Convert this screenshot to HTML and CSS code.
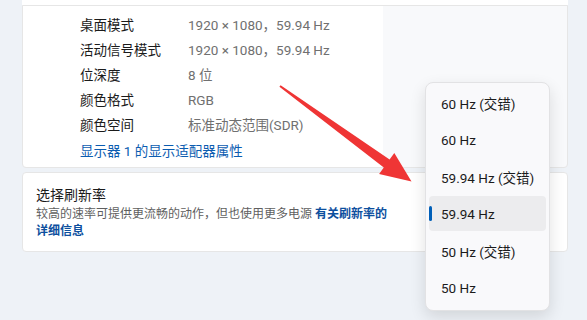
FILE: index.html
```html
<!DOCTYPE html>
<html lang="zh-CN">

<head>
    <meta charset="UTF-8">
    <meta name="viewport" content="width=device-width, initial-scale=1.0">
    <title>高级显示设置</title>
    <link rel="stylesheet" href="styles.css">
</head>

<body>
    <div class="page">
        <div class="prev-card"></div>

        <div class="card info-card">
            <div class="info-grid">
                <span class="label">桌面模式</span>
                <span class="value">1920 × 1080，59.94 Hz</span>
                <span class="label">活动信号模式</span>
                <span class="value">1920 × 1080，59.94 Hz</span>
                <span class="label">位深度</span>
                <span class="value">8 位</span>
                <span class="label">颜色格式</span>
                <span class="value">RGB</span>
                <span class="label">颜色空间</span>
                <span class="value">标准动态范围(SDR)</span>
            </div>
            <a class="link" href="#">显示器 1 的显示适配器属性</a>
        </div>

        <div class="card rate-card">
            <div class="rate-title">选择刷新率</div>
            <div class="rate-desc">
                <div>较高的速率可提供更流畅的动作，但也使用更多电源 <a class="link-bold" href="#">有关刷新率的</a></div>
                <div><a class="link-bold" href="#">详细信息</a></div>
            </div>
        </div>
    </div>

    <!-- annotation arrow -->
    <svg class="arrow" width="587" height="320" viewBox="0 0 587 320">
        <polygon points="280.6,85.2 389.6,159.4 394.3,152.9 411.5,181.5 379.1,173.9 383.8,167.4 279.4,86.8" fill="#ef3535" />
    </svg>

    <ul class="menu">
        <li class="menu-item">60 Hz (交错)</li>
        <li class="menu-item">60 Hz</li>
        <li class="menu-item">59.94 Hz (交错)</li>
        <li class="menu-item selected">59.94 Hz</li>
        <li class="menu-item">50 Hz (交错)</li>
        <li class="menu-item">50 Hz</li>
    </ul>
</body>

</html>
```

FILE: styles.css
```css
* {
    margin: 0;
    padding: 0;
    box-sizing: border-box;
}

body {
    width: 587px;
    height: 320px;
    overflow: hidden;
    position: relative;
    background-color: #eef2f7;
    font-family: Roboto, "Noto Sans CJK SC", sans-serif;
    color: #1b1b1b;
}

.page {
    padding: 0 19px 0 22px;
}

.prev-card {
    height: 5px;
    background-color: #ffffff;
}

.card {
    background-color: #ffffff;
    border: 1px solid #e6e6e6;
    border-radius: 0 0 4px 4px;
}

.info-card {
    height: 163px;
    padding: 7px 0 0 57px;
    background: linear-gradient(90deg, #ffffff 360px, #f8f9fb 360px);
}

.info-grid {
    display: grid;
    grid-template-columns: 108px auto;
    line-height: 25px;
    font-size: 13.5px;
}

.value {
    color: #707070;
}

.link {
    display: block;
    margin-top: 1px;
    line-height: 25px;
    font-size: 13.5px;
    color: #0b5cb0;
    text-decoration: none;
}

.rate-card {
    margin-top: 4px;
    height: 80px;
    padding: 12px 0 0 13px;
    border-radius: 4px;
}

.rate-title {
    font-size: 14px;
    line-height: 20px;
}

.rate-desc {
    width: 362px;
    margin-top: 1px;
    font-size: 12px;
    line-height: 17px;
    color: #5f5f5f;
}

.link-bold {
    color: #0d4f9e;
    font-weight: bold;
    text-decoration: none;
}

.arrow {
    position: absolute;
    left: 0;
    top: 0;
    pointer-events: none;
}

.menu {
    position: absolute;
    left: 425px;
    top: 82px;
    width: 125px;
    height: 229px;
    padding: 0 0 3px;
    list-style: none;
    background-color: #f9f9fb;
    border: 1px solid #e2e2e4;
    border-radius: 8px;
    box-shadow: 0 6px 16px rgba(0, 0, 0, 0.12);
}

.menu-item {
    position: relative;
    height: 35px;
    margin: 2px 3px;
    padding-left: 12px;
    border-radius: 4px;
    display: flex;
    align-items: center;
    font-size: 13.5px;
    color: #1b1b1b;
}

.menu-item.selected {
    background-color: #ececee;
}

.menu-item.selected::before {
    content: "";
    position: absolute;
    left: 0;
    top: 10px;
    width: 3px;
    height: 15px;
    border-radius: 2px;
    background-color: #005fb8;
}
```
